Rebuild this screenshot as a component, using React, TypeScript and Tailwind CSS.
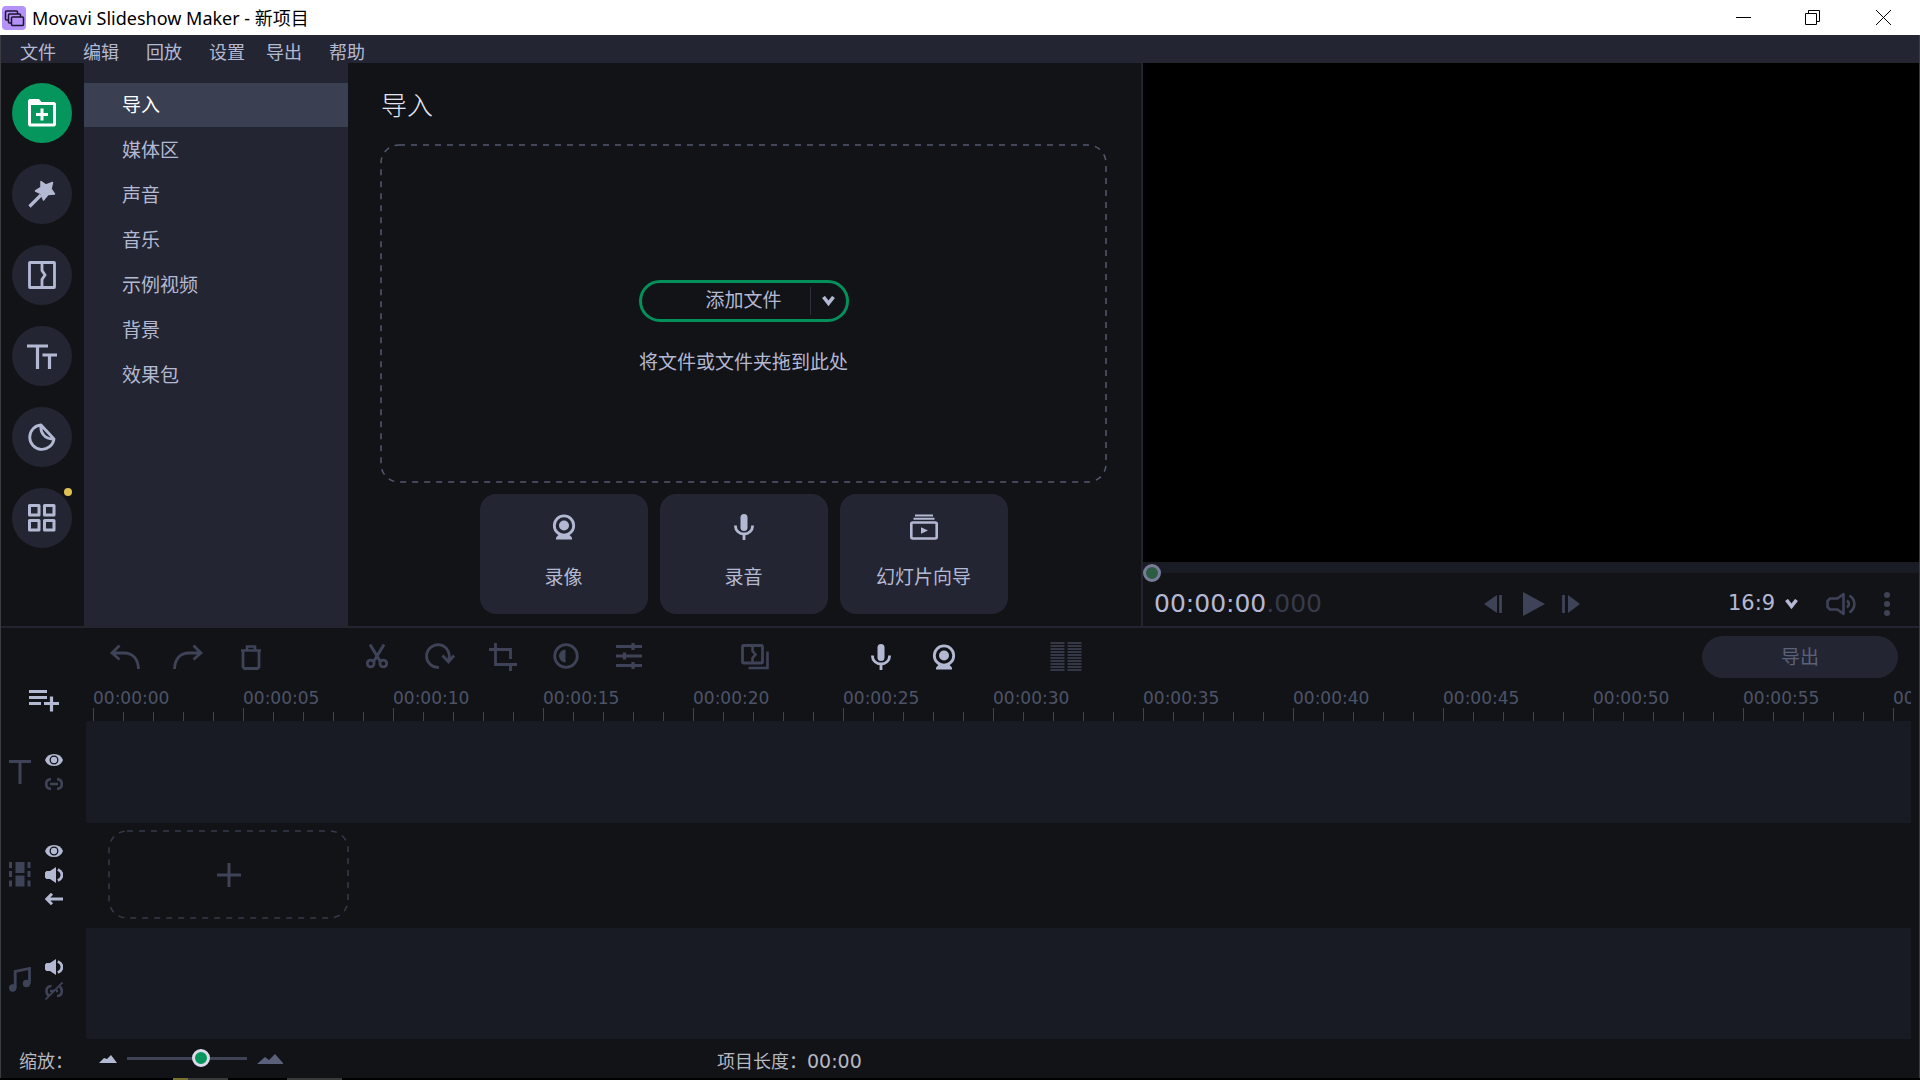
import type { ReactNode } from "react";

// Shared svg wrapper, icons are drawn on a grid of real pixels
function Icon({
  w,
  h,
  children,
}: {
  w: number;
  h: number;
  children: ReactNode;
}) {
  return (
    <svg
      width={w}
      height={h}
      viewBox={`0 0 ${w} ${h}`}
      fill="none"
      stroke="currentColor"
      strokeWidth={2.6}
      className="shrink-0"
      aria-hidden="true"
    >
      {children}
    </svg>
  );
}

// Icons
const LogoIcon = () => (
  <svg width={24} height={24} viewBox="0 0 24 24" aria-hidden="true">
    <rect width={24} height={24} rx={4} fill="#b492f7" />
    <g fill="#b492f7" stroke="#1c1630" strokeWidth={1.5}>
      <rect x={3.5} y={5} width={12} height={9} rx={1} />
      <rect x={6.5} y={8} width={12} height={9} rx={1} />
      <rect x={9.5} y={11} width={12} height={8.5} rx={1} />
    </g>
  </svg>
);

const ImportIcon = () => (
  <Icon w={28} h={28}>
    <path
      d="M0 1.5 1.5 0H11l2.5 3H26.5L28 4.5V26l-1.5 1.5h-25L0 26zM3 6v18.500h22V6z"
      fill="currentColor"
      fillRule="evenodd"
      stroke="none"
    />
    <path d="M8 15.5h12M14 9.5v12" strokeWidth={3} />
  </Icon>
);

const WandIcon = () => (
  <Icon w={28} h={28}>
    <path d="M1.5 26.5 13 15" strokeWidth={3.2} />
    <path
      d="m13 1.500 5 3.500 6.500-2.500-1.500 6.500 3.500 5-6.500.500-4.500 5.500-2.500-6.500-5.500-2.500 5.500-3.500z"
      fill="currentColor"
      strokeWidth={1.5}
      strokeLinejoin="round"
    />
  </Icon>
);

const TransitionIcon = () => (
  <Icon w={28} h={28}>
    <rect x={1.5} y={1.5} width={25} height={25} rx={0.5} strokeWidth={2.8} />
    <path d="M14 1v8.500l3 4.500-3 4.500V27" strokeWidth={2.8} />
  </Icon>
);

const TitlesIcon = () => (
  <Icon w={30} h={25}>
    <path d="M0 2h21M10.500 2v23M15.500 11H30M22.500 11v14" strokeWidth={3.2} />
  </Icon>
);

const StickerIcon = () => (
  <Icon w={28} h={28}>
    <path
      d="M13 2A12.200 12.200 0 1 0 26 16L13 2c-1 8 4 14.500 13 14"
      strokeWidth={2.8}
      strokeLinejoin="round"
    />
  </Icon>
);

const MoreIcon = () => (
  <Icon w={28} h={28}>
    <path
      d="M1.500 1.500h9.500v9.500h-9.500zM16.500 1.500h9.500v9.500h-9.500zM1.500 16.500h9.500v9.500h-9.500zM16.500 16.500h9.500v9.500h-9.500z"
      strokeWidth={3}
      strokeLinejoin="round"
    />
  </Icon>
);

const WebcamIcon = () => (
  <Icon w={24} h={26}>
    <circle cx={12} cy={11.5} r={9.7} strokeWidth={2.8} />
    <circle cx={12} cy={11.5} r={5} fill="currentColor" stroke="none" />
    <path
      d="m7.500 20-3.500 3.500v2h16v-2l-3.500-3.500z"
      fill="currentColor"
      stroke="none"
    />
  </Icon>
);

const MicIcon = () => (
  <Icon w={20} h={26}>
    <rect
      x={6.5}
      y={0}
      width={7}
      height={17}
      rx={3.5}
      fill="currentColor"
      stroke="none"
    />
    <path d="M1.500 11.500v1a8.500 7.500 0 0 0 17 0v-1M10 20v6" strokeWidth={2.8} />
  </Icon>
);

const SlideshowIcon = () => (
  <Icon w={28} h={26}>
    <path d="M5 1.500h18M3.500 4.800h21" strokeWidth={2} />
    <rect x={1.3} y={8.5} width={25.4} height={16} rx={1.5} strokeWidth={2.6} />
    <path d="m11 13.300 7 3.200-7 3.200z" fill="currentColor" stroke="none" />
  </Icon>
);

const ChevronIcon = () => (
  <Icon w={13} h={10}>
    <path d="m1.500 1 5 6.300 5-6.300" strokeWidth={3.6} />
  </Icon>
);

const UndoIcon = () => (
  <Icon w={30} h={26}>
    <path
      d="M2 9h12c9 0 14 6 14.500 16M9.500 1.500 2 9l7.500 6.500"
      strokeWidth={2.8}
    />
  </Icon>
);

const RedoIcon = () => (
  <Icon w={30} h={26}>
    <path
      d="M28 9H16C7 9 2 15 1.500 25M20.500 1.500 28 9l-7.500 6.500"
      strokeWidth={2.8}
    />
  </Icon>
);

const TrashIcon = () => (
  <Icon w={22} h={26}>
    <path d="M1 6.500h20M7 6V2.500h8V6" strokeWidth={2.6} />
    <path
      d="M3 6.500v16.500l1.500 1.500h13l1.500-1.500V6.500"
      strokeWidth={2.8}
    />
  </Icon>
);

const ScissorsIcon = () => (
  <Icon w={22} h={26}>
    <path d="M4 1.500 14 18M18 1.500 8 18" strokeWidth={3} />
    <circle cx={4.7} cy={20.5} r={3.4} strokeWidth={2.8} />
    <circle cx={17.3} cy={20.5} r={3.4} strokeWidth={2.8} />
  </Icon>
);

const RotateIcon = () => (
  <Icon w={30} h={26}>
    <path
      d="M14 24.300A11.300 11.300 0 1 1 23.500 17M17.500 12.500l6 6.500 5.500-6.500"
      strokeWidth={2.8}
    />
  </Icon>
);

const CropIcon = () => (
  <Icon w={28} h={28}>
    <path
      d="M6.500 0v21.500H28M0 6.500h21.500V16M21.500 21.500V28"
      strokeWidth={2.8}
    />
  </Icon>
);

const ContrastIcon = () => (
  <Icon w={26} h={26}>
    <circle cx={13} cy={13} r={11.3} strokeWidth={2.8} />
    <path
      d="M12.500 6.500a6.500 6.500 0 0 0 0 13z"
      fill="currentColor"
      stroke="none"
    />
  </Icon>
);

const SlidersIcon = () => (
  <Icon w={26} h={26}>
    <path d="M0 3.500h26M0 13h26M0 22.500h26" strokeWidth={3} />
    <path d="M17 0v7M8.500 9.500v7M17 19v7" strokeWidth={3.2} />
  </Icon>
);

const WizardIcon = () => (
  <Icon w={28} h={26}>
    <rect x={1.5} y={1.5} width={20} height={17.5} rx={1} strokeWidth={2.8} />
    <path d="M11.500 2v5l3 3.500-3 3.500v5" strokeWidth={2.6} />
    <path d="M26.500 7.500v16.500H7.500" strokeWidth={2.6} />
  </Icon>
);

const MeterIcon = () => (
  <Icon w={32} h={30}>
    <path
      d="M7.500 0v30M24.500 0v30"
      strokeWidth={14}
      strokeDasharray="2 1"
    />
  </Icon>
);

const PrevFrameIcon = () => (
  <Icon w={18} h={20}>
    <path d="M0 10 13 1v18z" fill="currentColor" stroke="none" />
    <path d="M16.500 1v18" strokeWidth={2.8} />
  </Icon>
);

const PlayIcon = () => (
  <Icon w={22} h={24}>
    <path d="M0 0 22 12 0 24z" fill="currentColor" stroke="none" />
  </Icon>
);

const NextFrameIcon = () => (
  <Icon w={18} h={20}>
    <path d="M18 10 6 1v18z" fill="currentColor" stroke="none" />
    <path d="M1.500 1v18" strokeWidth={2.8} />
  </Icon>
);

const VolumeIcon = () => (
  <Icon w={30} h={24}>
    <path
      d="M17.500 2v20l-6-4.500H4L1.500 15V9L4 6.500h7.500z"
      strokeWidth={2.6}
      strokeLinejoin="round"
    />
    <path
      d="M21 8.500c2.500 2 2.500 5 0 7M23.500 3.500c6.500 4.500 6.500 12.500 0 17"
      strokeWidth={2.6}
    />
  </Icon>
);

const DotsIcon = () => (
  <Icon w={6} h={24}>
    <g fill="currentColor" stroke="none">
      <circle cx={3} cy={3} r={3} />
      <circle cx={3} cy={12} r={3} />
      <circle cx={3} cy={21} r={3} />
    </g>
  </Icon>
);

const AddTrackIcon = () => (
  <Icon w={32} h={24}>
    <path
      d="M1 3.500h18M1 9.500h18M1 15.500h12M16 15.500h15M23.500 8.500v15"
      strokeWidth={3.2}
    />
  </Icon>
);

const EyeIcon = () => (
  <Icon w={18} h={12}>
    <path
      d="M9 0c4.500 0 7.500 2 9 6-1.500 4-4.500 6-9 6S1.500 10 0 6c1.500-4 4.500-6 9-6z"
      fill="currentColor"
      stroke="none"
    />
    <circle cx={9} cy={6} r={3.8} stroke="#121317" strokeWidth={1.3} />
  </Icon>
);

const LinkIcon = () => (
  <Icon w={18} h={12}>
    <path
      d="M6 1.200C3 1.200 1.200 3 1.200 6S3 10.800 6 10.800M12 1.200c3 0 4.800 1.800 4.800 4.800s-1.800 4.800-4.800 4.800M5 6h8"
      strokeWidth={2.6}
    />
  </Icon>
);

const UnlinkIcon = () => (
  <Icon w={18} h={18}>
    <path
      d="M6.500 4C3 4 1.500 6 1.500 9s1 4 2.500 4.800M12 14c3 0 4.800-2 4.800-5 0-2-.800-3.500-2-4.300M5 9h4M11 9h2"
      strokeWidth={2.6}
    />
    <path d="M.500 17.500 17.500.500" strokeWidth={1.8} />
  </Icon>
);

const SpeakerIcon = () => (
  <Icon w={18} h={16}>
    <path
      d="M11 0v16l-6-4H1.500L0 10.500v-5L1.500 4H5z"
      fill="currentColor"
      stroke="none"
    />
    <path d="M12.800 2.500c5.500 2.300 5.500 8.700 0 11" strokeWidth={2.8} />
  </Icon>
);

const ArrowIcon = () => (
  <Icon w={18} h={12}>
    <path d="M18 6H2M7 .800 1.800 6 7 11.200" strokeWidth={3} />
  </Icon>
);

const TitleTrackIcon = () => (
  <Icon w={22} h={24}>
    <path d="M0 1.500h22M11 1.500V24" strokeWidth={3} />
  </Icon>
);

const FilmIcon = () => (
  <Icon w={22} h={25}>
    <path
      d="M6.500 0h9v11h-9zM6.500 13.500h9v11h-9z"
      fill="currentColor"
      stroke="none"
    />
    <path
      d="M1.500 0v6M1.500 9v6M1.500 18.500v6M20 0v6M20 9v6M20 18.500v6"
      strokeWidth={3}
    />
  </Icon>
);

const MusicIcon = () => (
  <Icon w={22} h={25}>
    <path d="M6.200 21V4.500L20.500 1.500v15" strokeWidth={2.8} />
    <circle cx={3.7} cy={21} r={3.7} fill="currentColor" stroke="none" />
    <circle cx={17.5} cy={16.5} r={3.7} fill="currentColor" stroke="none" />
  </Icon>
);

const menuGroups = [
  ["文件", "编辑", "回放", "设置"],
  ["导出", "帮助"],
];

const railItems = [
  { label: "导入", icon: <ImportIcon />, active: true },
  { label: "滤镜", icon: <WandIcon /> },
  { label: "转场", icon: <TransitionIcon /> },
  { label: "标题", icon: <TitlesIcon /> },
  { label: "贴纸", icon: <StickerIcon /> },
  { label: "更多", icon: <MoreIcon />, badge: true },
];

const categories = ["导入", "媒体区", "声音", "音乐", "示例视频", "背景", "效果包"];

const actions = [
  { label: "录像", icon: <WebcamIcon /> },
  { label: "录音", icon: <MicIcon /> },
  { label: "幻灯片向导", icon: <SlideshowIcon /> },
];

const toolGroups = [
  [
    { label: "撤销", icon: <UndoIcon /> },
    { label: "重做", icon: <RedoIcon /> },
    { label: "删除", icon: <TrashIcon /> },
  ],
  [
    { label: "分割", icon: <ScissorsIcon /> },
    { label: "旋转", icon: <RotateIcon /> },
    { label: "裁剪", icon: <CropIcon /> },
    { label: "颜色", icon: <ContrastIcon /> },
    { label: "属性", icon: <SlidersIcon /> },
  ],
  [{ label: "转场向导", icon: <WizardIcon /> }],
  [
    { label: "录制音频", icon: <MicIcon />, bright: true },
    { label: "录制视频", icon: <WebcamIcon />, bright: true },
  ],
];

const seconds = Array.from({ length: 13 }, (_, i) => i * 5);

const timecode = (s: number) =>
  `00:${String(Math.floor(s / 60)).padStart(2, "0")}:${String(s % 60).padStart(2, "0")}`;

// Dashed outline with rounded corners
function DashedFrame({ className }: { className: string }) {
  return (
    <svg
      className={`absolute inset-0 h-full w-full overflow-visible ${className}`}
      aria-hidden="true"
    >
      <rect
        width="100%"
        height="100%"
        rx={18}
        fill="none"
        stroke="currentColor"
        strokeWidth={1.5}
        strokeDasharray="6 6"
      />
    </svg>
  );
}

function TrackHead({
  icon,
  children,
}: {
  icon: ReactNode;
  children?: ReactNode;
}) {
  return (
    <div className="flex w-[85px] shrink-0 items-center gap-[14px] pl-2 text-[#3f4358]">
      {icon}
      <div className="flex flex-col gap-1">{children}</div>
    </div>
  );
}

function TrackButton({
  label,
  dim,
  children,
}: {
  label: string;
  dim?: boolean;
  children: ReactNode;
}) {
  return (
    <button
      aria-label={label}
      className={`flex h-5 w-[18px] items-center justify-center ${dim ? "text-[#3f4358]" : "text-[#b4b9d3]"}`}
    >
      {children}
    </button>
  );
}

export default function App() {
  return (
    <div className="flex min-h-screen flex-col bg-[#121317] font-['Noto_Sans','Noto_Sans_CJK_SC',sans-serif] text-[#b4b9d3]">
      {/* Title bar */}
      <header className="flex h-[35px] items-center bg-white pl-[2px] text-black">
        <LogoIcon />
        <h1 className="ml-[6px] flex-1 text-[18px] leading-6">
          Movavi Slideshow Maker - 新项目
        </h1>
        <button
          aria-label="最小化"
          className="flex h-full w-[70px] items-center justify-center"
        >
          <svg width="15" height="15" stroke="currentColor" aria-hidden="true">
            <path d="M0 7.500h15" />
          </svg>
        </button>
        <button
          aria-label="还原"
          className="flex h-full w-[69px] items-center justify-center"
        >
          <svg
            width="15"
            height="15"
            fill="none"
            stroke="currentColor"
            aria-hidden="true"
          >
            <path d="M.500 3.500h11v11H.500zM3.500 3.500v-3h11v11h-3" />
          </svg>
        </button>
        <button
          aria-label="关闭"
          className="flex h-full w-[73px] items-center justify-center"
        >
          <svg width="15" height="15" stroke="currentColor" aria-hidden="true">
            <path d="m0 0 15 15M15 0 0 15" />
          </svg>
        </button>
      </header>

      <div className="flex flex-1 flex-col border-x border-[#3a3c42]">
        {/* Menu bar */}
        <nav className="flex h-7 items-center gap-[21px] bg-[#232632] pt-[6px] pl-[19px] text-[18px] leading-5">
          {menuGroups.map((group) => (
            <div key={group[0]} className="flex gap-[27px]">
              {group.map((item) => (
                <button key={item}>{item}</button>
              ))}
            </div>
          ))}
        </nav>

        <main className="grid flex-1 grid-cols-[83px_264px_minmax(0,793fr)_minmax(0,778fr)] border-b-2 border-[#23242f]">
          {/* Tool rail */}
          <nav className="flex flex-col gap-[21px] pt-5 pl-[11px]">
            {railItems.map((item) => (
              <button
                key={item.label}
                aria-label={item.label}
                className={`relative flex size-[60px] items-center justify-center rounded-full ${
                  item.active ? "bg-[#04965c] text-white" : "bg-[#232632]"
                }`}
              >
                {item.icon}
                {item.badge && (
                  <span className="absolute top-0 right-0 size-2 rounded-full bg-[#dfc052]" />
                )}
              </button>
            ))}
          </nav>

          {/* Categories */}
          <ul className="flex flex-col gap-px bg-[#232632] pt-5 text-[19px]">
            {categories.map((name, i) => (
              <li key={name}>
                <button
                  className={`h-11 w-full pl-[38px] text-left ${i === 0 ? "bg-[#3a3f52] text-white" : ""}`}
                >
                  {name}
                </button>
              </li>
            ))}
          </ul>

          {/* Import */}
          <section className="flex flex-col pr-[35px] pb-3 pl-[33px] text-[19px]">
            <h2 className="pt-[22px] pb-5 text-[26px] leading-10 font-light text-[#e4e7f2]">
              导入
            </h2>

            <div className="relative flex flex-1 flex-col items-center justify-center gap-6 pt-[30px]">
              <DashedFrame className="text-[#545a70]" />
              <div className="relative flex h-[42px] w-[210px] rounded-full border-[3px] border-[#04905a]">
                <button className="flex-1 pl-9">添加文件</button>
                <button
                  aria-label="更多添加选项"
                  className="my-1 flex w-9 items-center justify-center border-l border-[#2b2e3b]"
                >
                  <ChevronIcon />
                </button>
              </div>
              <p className="relative leading-8">将文件或文件夹拖到此处</p>
            </div>

            <div className="mt-3 flex justify-center gap-3">
              {actions.map((action) => (
                <button
                  key={action.label}
                  className="flex h-[120px] w-[168px] flex-col items-center gap-[21px] rounded-2xl bg-[#232632] pt-5"
                >
                  {action.icon}
                  <span className="leading-8">{action.label}</span>
                </button>
              ))}
            </div>
          </section>

          {/* Preview */}
          <section className="flex flex-col border-l-2 border-[#23242f] font-['DejaVu_Sans',sans-serif]">
            <div className="flex-1 bg-black" />
            <div className="h-[11px] bg-[#191c25]">
              <input
                type="range"
                aria-label="播放位置"
                defaultValue={0}
                className="block h-[22px] w-full appearance-none bg-transparent [&::-webkit-slider-thumb]:size-[18px] [&::-webkit-slider-thumb]:appearance-none [&::-webkit-slider-thumb]:rounded-full [&::-webkit-slider-thumb]:border-[3px] [&::-webkit-slider-thumb]:border-[#777c98] [&::-webkit-slider-thumb]:bg-[#2c5c43]"
              />
            </div>
            <div className="flex h-[53px] items-center pt-2 pr-[29px] pl-[11px]">
              <p className="flex-1 text-[25px]">
                00:00:00<span className="text-[#363a4a]">.000</span>
              </p>
              <div className="flex items-center gap-[17px] pl-5 text-[#3f4358]">
                <button aria-label="上一帧">
                  <PrevFrameIcon />
                </button>
                <button aria-label="播放" className="pl-1">
                  <PlayIcon />
                </button>
                <button aria-label="下一帧">
                  <NextFrameIcon />
                </button>
              </div>
              <div className="flex flex-1 items-center justify-end gap-7 text-[#3f4358]">
                <label className="relative flex items-center text-[#b4b9d3]">
                  <select
                    aria-label="宽高比"
                    className="w-[70px] appearance-none bg-transparent text-[21px] outline-none"
                  >
                    <option>16:9</option>
                  </select>
                  <span className="pointer-events-none absolute right-0">
                    <ChevronIcon />
                  </span>
                </label>
                <button aria-label="音量">
                  <VolumeIcon />
                </button>
                <button aria-label="更多">
                  <DotsIcon />
                </button>
              </div>
            </div>
          </section>
        </main>

        {/* Toolbar */}
        <div className="flex h-[58px] items-center gap-[63px] pr-[21px] pl-[92px]">
          {toolGroups.map((group, i) => (
            <div key={i} className="flex">
              {group.map((tool) => (
                <button
                  key={tool.label}
                  aria-label={tool.label}
                  className={`flex w-[63px] justify-center ${"bright" in tool ? "" : "text-[#3f4358]"}`}
                >
                  {tool.icon}
                </button>
              ))}
            </div>
          ))}
          <div className="pl-3 text-[#343746]">
            <MeterIcon />
          </div>
          <button className="ml-auto h-[42px] w-[196px] rounded-full bg-[#232632] text-[19px] text-[#5b607b]">
            导出
          </button>
        </div>

        {/* Timeline */}
        <div className="flex">
          <div className="w-[92px] shrink-0 pt-[2px] pl-[27px]">
            <button aria-label="添加轨道">
              <AddTrackIcon />
            </button>
          </div>
          <div className="mr-2 flex h-[35px] min-w-0 flex-1 overflow-hidden font-['DejaVu_Sans',sans-serif] text-[17px] leading-5 text-[#4d5368]">
            {seconds.map((s) => (
              <div
                key={s}
                className="flex w-[150px] shrink-0 flex-col justify-between pt-[2px]"
              >
                <span>{timecode(s)}</span>
                <div className="flex items-end">
                  <i className="h-[15px] w-[30px] border-l border-[#3f4358]" />
                  <i className="h-[11px] w-[30px] border-l border-[#3f4358]" />
                  <i className="h-[11px] w-[30px] border-l border-[#3f4358]" />
                  <i className="h-[11px] w-[30px] border-l border-[#3f4358]" />
                  <i className="h-[11px] w-[30px] border-l border-[#3f4358]" />
                </div>
              </div>
            ))}
          </div>
        </div>

        <div className="flex h-[102px]">
          <TrackHead icon={<TitleTrackIcon />}>
            <TrackButton label="显示轨道">
              <EyeIcon />
            </TrackButton>
            <TrackButton label="链接轨道" dim>
              <LinkIcon />
            </TrackButton>
          </TrackHead>
          <div className="mr-2 flex-1 bg-[#191b24]" />
        </div>

        <div className="flex h-[105px] pb-[2px]">
          <TrackHead icon={<FilmIcon />}>
            <TrackButton label="显示轨道">
              <EyeIcon />
            </TrackButton>
            <TrackButton label="静音">
              <SpeakerIcon />
            </TrackButton>
            <TrackButton label="移动轨道">
              <ArrowIcon />
            </TrackButton>
          </TrackHead>
          <div className="flex flex-1 items-center pl-[23px]">
            <button
              aria-label="添加剪辑"
              className="relative flex h-[87px] w-[239px] items-center justify-center text-[#3f4358]"
            >
              <DashedFrame className="text-[#363a4a]" />
              <Icon w={24} h={24}>
                <path d="M0 12h24M12 0v24" strokeWidth={3} />
              </Icon>
            </button>
          </div>
        </div>

        {/* The head sits in the upper 102px, like in the title track */}
        <div className="flex h-[111px]">
          <div className="flex h-[102px]">
            <TrackHead icon={<MusicIcon />}>
              <TrackButton label="静音">
                <SpeakerIcon />
              </TrackButton>
              <TrackButton label="取消链接" dim>
                <UnlinkIcon />
              </TrackButton>
            </TrackHead>
          </div>
          <div className="mr-2 flex-1 bg-[#191b24]" />
        </div>

        {/* Status bar */}
        <footer className="flex h-[39px] items-center pl-[18px] text-[18px] text-[#b6b8c2]">
          <label htmlFor="zoom" className="w-20 pt-[6px]">
            缩放：
          </label>
          <svg width="18" height="8" fill="#b4b9d3" aria-hidden="true">
            <path d="M0 8 5 3l3 1 4-4 6 8z" />
          </svg>
          <input
            id="zoom"
            type="range"
            defaultValue={64}
            className="mx-[10px] h-5 w-[120px] appearance-none bg-transparent [&::-webkit-slider-runnable-track]:h-[3px] [&::-webkit-slider-runnable-track]:bg-[#3f4358] [&::-webkit-slider-thumb]:-mt-2 [&::-webkit-slider-thumb]:size-[18px] [&::-webkit-slider-thumb]:appearance-none [&::-webkit-slider-thumb]:rounded-full [&::-webkit-slider-thumb]:border-[3px] [&::-webkit-slider-thumb]:border-[#d9dbe8] [&::-webkit-slider-thumb]:bg-[#04965c]"
          />
          <svg width="26" height="10" fill="#5b607b" aria-hidden="true">
            <path d="m0 10 8-7 4 3 6-6 8 9v1z" />
          </svg>
          <p className="ml-[434px] flex items-center pt-[6px]">
            项目长度：
            <span className="font-['DejaVu_Sans',sans-serif] text-[19px]">
              00:00
            </span>
          </p>
        </footer>
      </div>

      {/* Strip of the desktop taskbar */}
      <div className="flex h-[2px] bg-black pl-[173px]">
        <i className="w-[15px] bg-[#77732c]" />
        <i className="w-10 bg-[#3a3a3a]" />
        <i className="ml-[59px] w-[55px] bg-[#3a3a3a]" />
      </div>
    </div>
  );
}
